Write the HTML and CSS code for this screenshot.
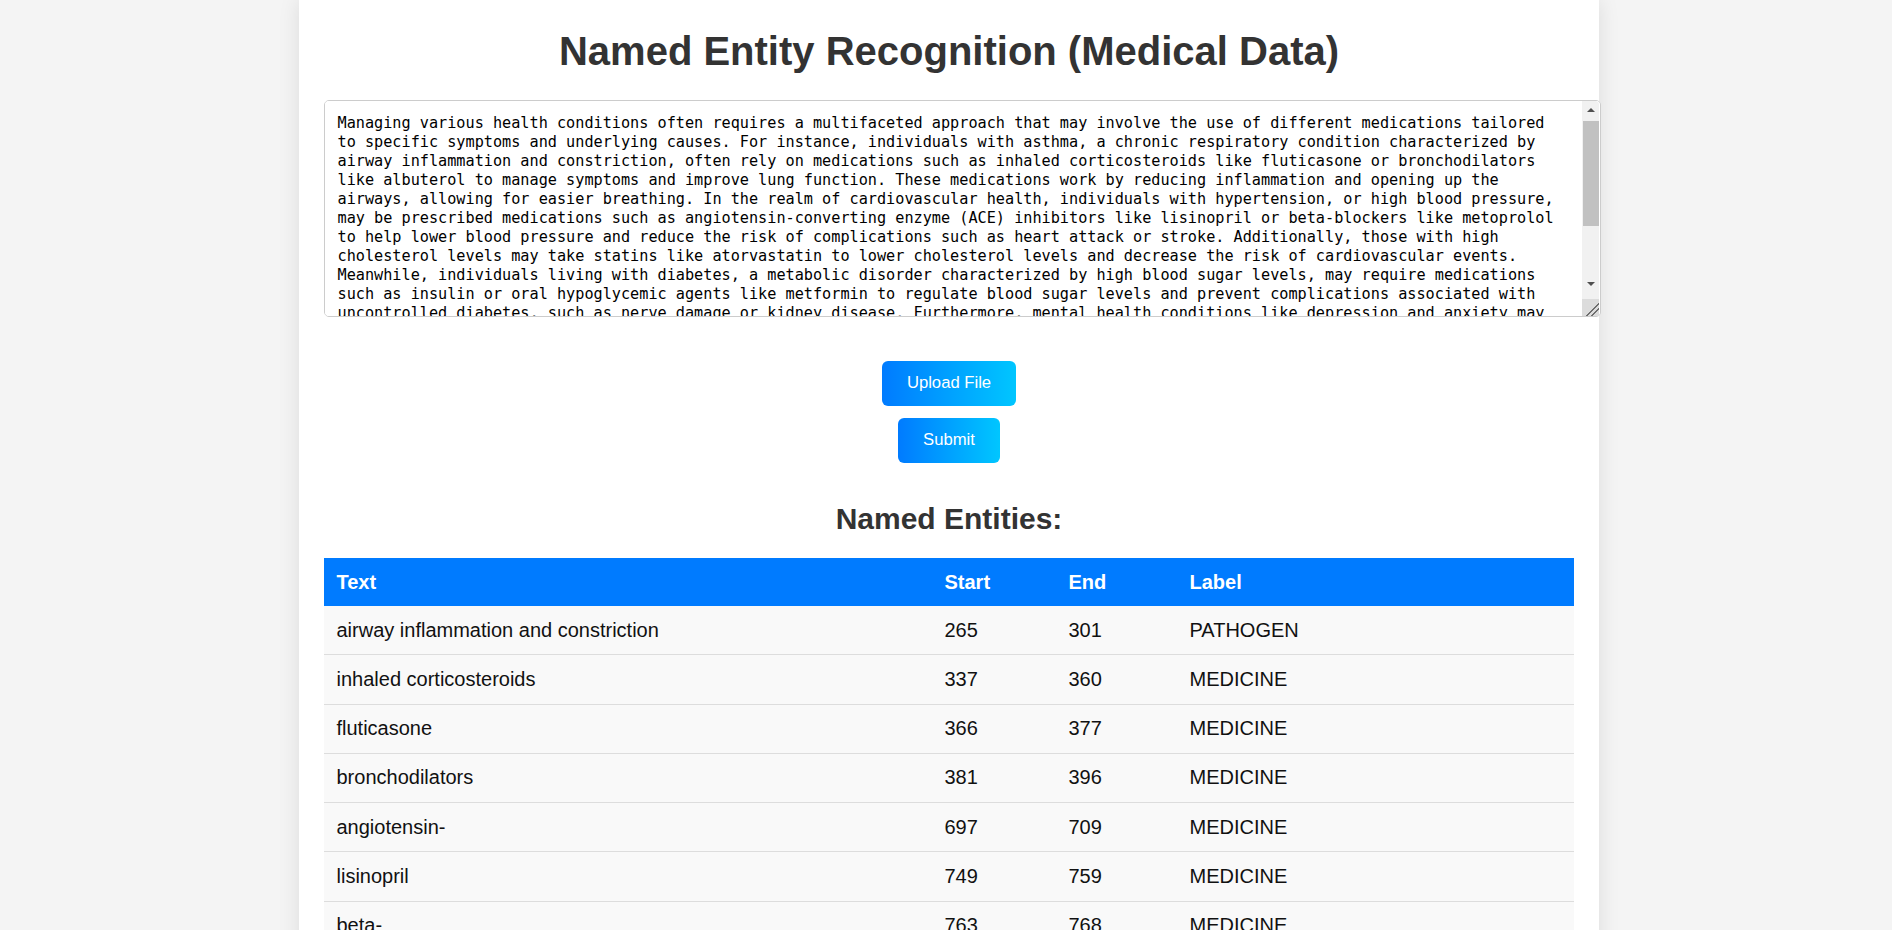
FILE: index.html
```html
<!DOCTYPE html>
<html lang="en">
<head>
<meta charset="utf-8">
<title>Named Entity Recognition (Medical Data)</title>
<link rel="stylesheet" href="styles.css">
</head>
<body>
<div class="container">
  <h1 class="title">Named Entity Recognition (Medical Data)</h1>
  <form class="ner-form">
    <div class="editor">
      <textarea class="input-text" name="text">Managing various health conditions often requires a multifaceted approach that may involve the use of different medications tailored
to specific symptoms and underlying causes. For instance, individuals with asthma, a chronic respiratory condition characterized by
airway inflammation and constriction, often rely on medications such as inhaled corticosteroids like fluticasone or bronchodilators
like albuterol to manage symptoms and improve lung function. These medications work by reducing inflammation and opening up the
airways, allowing for easier breathing. In the realm of cardiovascular health, individuals with hypertension, or high blood pressure,
may be prescribed medications such as angiotensin-converting enzyme (ACE) inhibitors like lisinopril or beta-blockers like metoprolol
to help lower blood pressure and reduce the risk of complications such as heart attack or stroke. Additionally, those with high
cholesterol levels may take statins like atorvastatin to lower cholesterol levels and decrease the risk of cardiovascular events.
Meanwhile, individuals living with diabetes, a metabolic disorder characterized by high blood sugar levels, may require medications
such as insulin or oral hypoglycemic agents like metformin to regulate blood sugar levels and prevent complications associated with
uncontrolled diabetes, such as nerve damage or kidney disease. Furthermore, mental health conditions like depression and anxiety may
be treated with antidepressants such as selective serotonin reuptake inhibitors (SSRIs) like sertraline or fluoxetine, or with
anti-anxiety medications like benzodiazepines such as alprazolam or lorazepam. It is essential for individuals to work closely with
their healthcare providers to determine the most appropriate medication regimen for their specific needs, taking into account
factors such as potential side effects, drug interactions, and individual health history.</textarea>
      <div class="scrollbar" aria-hidden="true">
        <div class="sb-button"><span class="arrow-up"></span></div>
        <div class="sb-track"><div class="sb-thumb"></div></div>
        <div class="sb-button sb-button-down"><span class="arrow-down"></span></div>
        <div class="sb-corner"></div>
      </div>
    </div>
    <div class="actions">
      <label class="btn" for="file-input">Upload File</label>
      <input class="file-input" id="file-input" type="file">
      <button class="btn" type="submit">Submit</button>
    </div>
  </form>
  <h2 class="subtitle">Named Entities:</h2>
  <table class="entities">
    <thead>
      <tr>
        <th class="col-text">Text</th>
        <th class="col-start">Start</th>
        <th class="col-end">End</th>
        <th class="col-label">Label</th>
      </tr>
    </thead>
    <tbody>
      <tr><td>airway inflammation and constriction</td><td>265</td><td>301</td><td>PATHOGEN</td></tr>
      <tr><td>inhaled corticosteroids</td><td>337</td><td>360</td><td>MEDICINE</td></tr>
      <tr><td>fluticasone</td><td>366</td><td>377</td><td>MEDICINE</td></tr>
      <tr><td>bronchodilators</td><td>381</td><td>396</td><td>MEDICINE</td></tr>
      <tr><td>angiotensin-</td><td>697</td><td>709</td><td>MEDICINE</td></tr>
      <tr><td>lisinopril</td><td>749</td><td>759</td><td>MEDICINE</td></tr>
      <tr><td>beta-</td><td>763</td><td>768</td><td>MEDICINE</td></tr>
      <tr><td>metoprolol</td><td>782</td><td>792</td><td>MEDICINE</td></tr>
      <tr><td>atorvastatin</td><td>962</td><td>974</td><td>MEDICINE</td></tr>
    </tbody>
  </table>
</div>
</body>
</html>
```

FILE: styles.css
```css
html {
  scrollbar-width: none;
}

body {
  margin: 0;
  padding: 0 0 0 6px;
  background: #f4f4f4;
  font-family: "Liberation Sans", Arial, sans-serif;
  color: #333;
}

.container {
  width: 1300px;
  box-sizing: border-box;
  margin: 0 auto;
  padding: 2px 25px 25px;
  background: #fff;
  box-shadow: 0 0 20px rgba(0, 0, 0, 0.1);
}

.title {
  margin: 27px 0 26px;
  font-size: 40px;
  font-weight: bold;
  text-align: center;
  color: #333;
}

.ner-form {
  margin: 0;
}

.editor {
  position: relative;
  width: 1276px;
}

.input-text {
  display: block;
  width: 1250px;
  height: 189.5px;
  padding: 12.5px;
  margin: 0;
  border: 1px solid #ccc;
  border-radius: 5px;
  font-family: "DejaVu Sans Mono", "Liberation Mono", monospace;
  font-size: 15.2px;
  line-height: 19.1px;
  color: #000;
  background: #fff;
  white-space: pre-wrap;
  overflow-y: scroll;
}

.scrollbar {
  position: absolute;
  top: 1px;
  right: 1px;
  bottom: 1px;
  width: 17px;
  display: flex;
  flex-direction: column;
  background: #f1f1f1;
  border-top-right-radius: 4px;
  overflow: hidden;
}

.sb-button {
  flex: 0 0 17px;
  display: flex;
  justify-content: center;
  align-items: center;
}

.sb-button-down {
  align-items: flex-start;
  padding-top: 0;
}

.arrow-up {
  width: 0;
  height: 0;
  border-left: 4px solid transparent;
  border-right: 4px solid transparent;
  border-bottom: 4px solid #505050;
}

.arrow-down {
  width: 0;
  height: 0;
  margin-top: 0;
  border-left: 4px solid transparent;
  border-right: 4px solid transparent;
  border-top: 4px solid #505050;
}

.sb-track {
  flex: 1;
  padding-top: 3px;
}

.sb-thumb {
  height: 105px;
  margin-left: 1px;
  background: #c1c1c1;
}

.sb-corner {
  flex: 0 0 17px;
  background-color: #dcdcdc;
  background-image: linear-gradient(135deg, transparent 60%, #6e6e6e 60%, #6e6e6e 65%, transparent 65%, transparent 76%, #6e6e6e 76%, #6e6e6e 81%, transparent 81%);
}

.actions {
  display: flex;
  flex-direction: column;
  align-items: center;
  gap: 12px;
  margin-top: 44px;
}

.file-input {
  display: none;
}

.btn {
  display: inline-block;
  padding: 12.5px 25px;
  border: none;
  border-radius: 6px;
  background: linear-gradient(to right, #007bff, #00c6ff);
  color: #fff;
  font-family: "Liberation Sans", Arial, sans-serif;
  font-size: 16.67px;
  line-height: 20px;
  cursor: pointer;
}

.subtitle {
  margin: 39px 0 22.5px;
  font-size: 30px;
  font-weight: bold;
  text-align: center;
  color: #333;
}

.entities {
  width: 100%;
  border-collapse: collapse;
  font-size: 20px;
}

.entities th {
  padding: 12.5px;
  background: #007bff;
  color: #fff;
  font-weight: bold;
  text-align: left;
  line-height: 23px;
}

.entities td {
  padding: 12.5px;
  background: #f9f9f9;
  color: #111;
  border-bottom: 1px solid #ddd;
  line-height: 23.3px;
}

.col-text {
  width: 583px;
}

.col-start {
  width: 99px;
}

.col-end {
  width: 96px;
}
```
